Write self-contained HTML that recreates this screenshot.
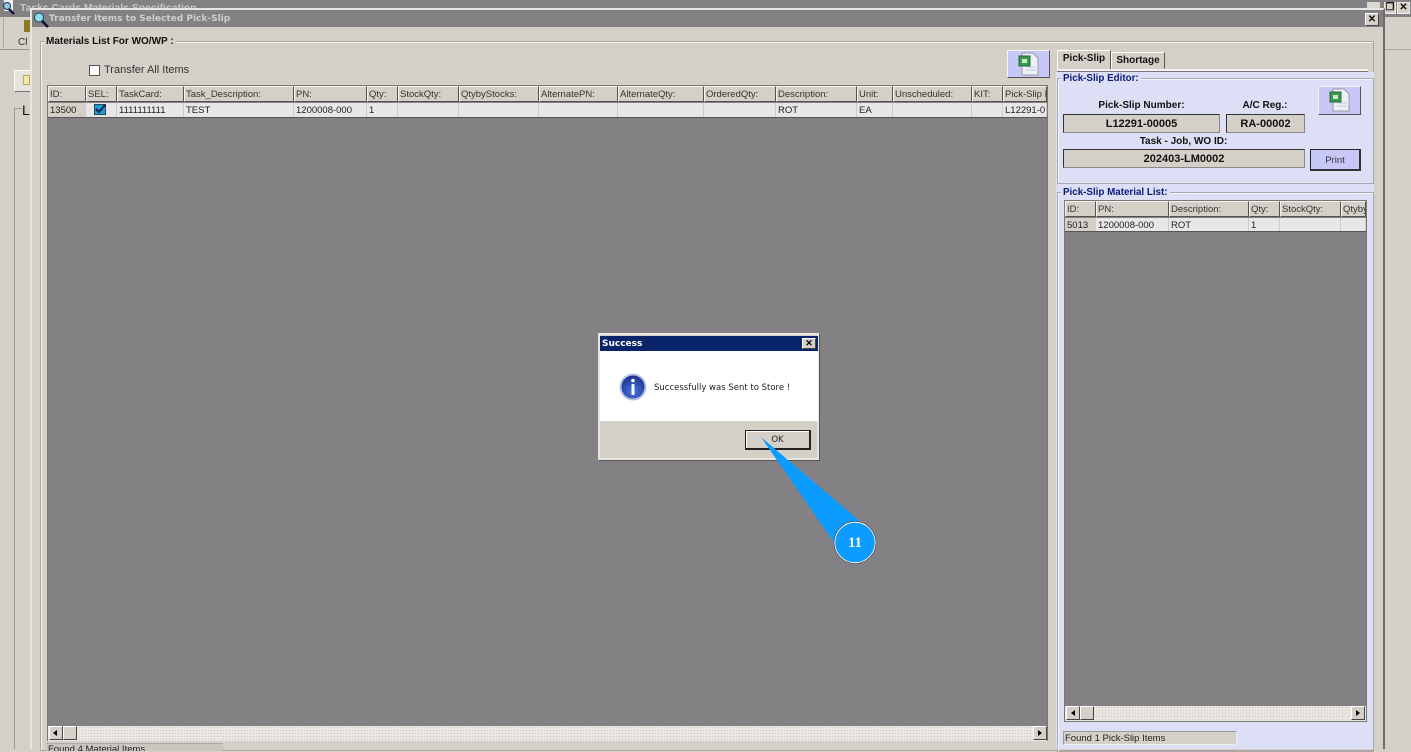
<!DOCTYPE html>
<html><head><meta charset="utf-8"><style>
html,body{margin:0;padding:0}
body{width:1411px;height:749px;overflow:hidden;position:relative;background:#d4d0c8;font-family:"Liberation Sans",sans-serif;font-size:9.5px;color:#222}
div,span{position:absolute;box-sizing:border-box;white-space:nowrap}
.h{background:#d4d0c8;border:1px solid;border-color:#f4f3ef #55524e #55524e #f4f3ef;height:16px;line-height:16px;padding-left:1px;color:#333;overflow:hidden}
.c{background:#e8e6e6;border-right:1px solid #cfccc8;height:14px;line-height:15px;padding-left:2px;color:#222;overflow:hidden}
.b{font-weight:bold;color:#111}
.n{color:#0a1a78;font-weight:bold;background:#dcdff5;padding:0 2px;line-height:11px;font-size:9.800px}
.f{background:#d4d0c8;border:1px solid;border-color:#333 #888 #888 #333;text-align:center;font-weight:bold;font-size:11px;color:#111}
.sb{background:#ebe9e6;background-image:radial-gradient(#d4d0c8 35%,transparent 40%);background-size:3px 3px}
.btn{background:#d4d0c8;border:1px solid;border-color:#fff #444 #444 #fff}
.xl{background:#c8c8f8;border:1px solid;border-color:#f2f2ff #555 #555 #f2f2ff}
</style></head><body>
<!-- back window -->
<div style="left:0;top:0;width:1411px;height:17px;background:#838184"></div>
<div style="left:20px;top:3px;font-size:10.400px;font-weight:bold;color:#c8c6c4">Tasks Cards Materials Specification</div>
<svg style="position:absolute;left:1px;top:0" width="16" height="15"><rect x="3" y="0" width="9" height="11" fill="#eee"/><circle cx="6" cy="6" r="3.500" fill="#8cd" stroke="#236"/><path d="M8 9l5 5" stroke="#114" stroke-width="2.500"/></svg>
<div style="left:0;top:17px;width:30px;height:33px;background:#d4d0c8;border-bottom:1px solid #999"></div>
<div style="left:3px;top:18px;width:1px;height:30px;background:#aaa"></div>
<div style="left:24px;top:20px;width:6px;height:12px;background:#8a7a20"></div>
<div style="left:18px;top:37px;font-size:10px;color:#333">Cl</div>
<div style="left:14px;top:70px;width:18px;height:22px;background:#e6e4de;border:1px solid;border-color:#fff #777 #777 #fff"></div>
<div style="left:23px;top:75px;width:7px;height:10px;background:#f3e9b0;border:1px solid #b9a85a"></div>
<div style="left:14px;top:108px;width:16px;height:641px;border-left:1px solid #999;border-top:1px solid #999"></div>
<div style="left:22px;top:102px;font-size:14px;color:#111;background:#d4d0c8;width:8px;height:16px;line-height:16px">L</div>
<div style="left:1384px;top:17px;width:27px;height:33px;border-bottom:1px solid #aaa"></div>
<div style="left:1384px;top:2px;width:12px;height:12px;background:#d4d0c8;border:1px solid #eee;font-size:10px;line-height:10px;font-weight:bold;text-align:center;color:#111">&#10064;</div>
<div style="left:1397px;top:2px;width:13px;height:12px;background:#d4d0c8;border:1px solid #eee;font-size:10px;line-height:10px;font-weight:bold;text-align:center;color:#111">&#10005;</div>
<div style="left:1367px;top:2px;width:13px;height:8px;background:#d9d7d2"></div>

<!-- front window -->
<div style="left:30px;top:8px;width:1355px;height:741px;background:#d4d0c8;border-top:2px solid #e8e6e2;border-left:2px solid #e8e6e2;border-right:2px solid #6e6c6c"></div>
<div style="left:32px;top:10px;width:1351px;height:17px;background:#838184"></div>
<svg style="position:absolute;left:33px;top:12px" width="16" height="16"><circle cx="6" cy="5.500" r="4.500" fill="#8cdfe8" stroke="#246"/><path d="M9 9l6 6" stroke="#113" stroke-width="2.500"/></svg>
<div style="left:49px;top:13px;font-family:'DejaVu Sans',sans-serif;font-size:9px;font-weight:bold;color:#d0cfcc;line-height:13px">Transfer Items to Selected Pick-Slip</div>
<div class="btn" style="left:1365px;top:13px;width:14px;height:13px;text-align:center;font-size:10px;line-height:11px;font-weight:bold;color:#111">&#10005;</div>

<!-- materials fieldset -->
<div style="left:40px;top:41px;width:1334px;height:710px;border:1px solid #aaa79f;box-shadow:inset 1px 1px 0 #f4f3ef"></div>
<div class="b" style="left:44px;top:36px;background:#d4d0c8;padding:0 2px;font-size:10px;line-height:12px">Materials List For WO/WP :</div>
<div style="left:89px;top:65px;width:11px;height:11px;background:#fff;border:1px solid #555"></div>
<div style="left:104px;top:64px;font-size:11px;line-height:13px;color:#333">Transfer All Items</div>
<div class="xl" style="left:1007px;top:50px;width:43px;height:28px"></div>
<svg style="position:absolute;left:1018px;top:52px" width="22" height="24"><path d="M4 1h11l5 5v17H4z" fill="#eef0f6" stroke="#99a"/><rect x="1" y="4" width="11" height="10" fill="#3a9a4a" stroke="#264"/><rect x="4" y="7" width="5" height="4" fill="#cfe8c8"/><path d="M8 15h10M8 18h10" stroke="#bcd"/></svg>

<!-- main grid -->
<div style="left:47px;top:85px;width:1001px;height:656px;background:#838184;border:1px solid #777"></div>
<div class="h" style="left:48px;top:86px;width:38px">ID:</div>
<div class="h" style="left:86px;top:86px;width:31px">SEL:</div>
<div class="h" style="left:117px;top:86px;width:67px">TaskCard:</div>
<div class="h" style="left:184px;top:86px;width:110px">Task_Description:</div>
<div class="h" style="left:294px;top:86px;width:73px">PN:</div>
<div class="h" style="left:367px;top:86px;width:31px">Qty:</div>
<div class="h" style="left:398px;top:86px;width:61px">StockQty:</div>
<div class="h" style="left:459px;top:86px;width:80px">QtybyStocks:</div>
<div class="h" style="left:539px;top:86px;width:79px">AlternatePN:</div>
<div class="h" style="left:618px;top:86px;width:86px">AlternateQty:</div>
<div class="h" style="left:704px;top:86px;width:72px">OrderedQty:</div>
<div class="h" style="left:776px;top:86px;width:81px">Description:</div>
<div class="h" style="left:857px;top:86px;width:36px">Unit:</div>
<div class="h" style="left:893px;top:86px;width:79px">Unscheduled:</div>
<div class="h" style="left:972px;top:86px;width:31px">KIT:</div>
<div class="h" style="left:1003px;top:86px;width:44px">Pick-Slip N</div>

<div class="c" style="left:48px;top:103px;width:38px;background:#d4d0c8">13500</div>
<div class="c" style="left:86px;top:103px;width:31px"></div>
<div style="left:94px;top:104px;width:12px;height:11px;background:#1aa0d0;border:1px solid #345"></div>
<svg style="position:absolute;left:94px;top:103px" width="13" height="12"><path d="M2 6l3 3 6-7" fill="none" stroke="#0a1a50" stroke-width="2"/></svg>
<div class="c" style="left:117px;top:103px;width:67px">1111111111</div>
<div class="c" style="left:184px;top:103px;width:110px">TEST</div>
<div class="c" style="left:294px;top:103px;width:73px">1200008-000</div>
<div class="c" style="left:367px;top:103px;width:31px">1</div>
<div class="c" style="left:398px;top:103px;width:61px"></div>
<div class="c" style="left:459px;top:103px;width:80px"></div>
<div class="c" style="left:539px;top:103px;width:79px"></div>
<div class="c" style="left:618px;top:103px;width:86px"></div>
<div class="c" style="left:704px;top:103px;width:72px"></div>
<div class="c" style="left:776px;top:103px;width:81px">ROT</div>
<div class="c" style="left:857px;top:103px;width:36px">EA</div>
<div class="c" style="left:893px;top:103px;width:79px"></div>
<div class="c" style="left:972px;top:103px;width:31px"></div>
<div class="c" style="left:1003px;top:103px;width:44px">L12291-0</div>
<div style="left:48px;top:117px;width:999px;height:1px;background:#555"></div>

<div class="sb" style="left:48px;top:726px;width:999px;height:15px"></div>
<div class="btn" style="left:49px;top:726px;width:14px;height:14px"></div>
<div style="left:53px;top:730px;width:0;height:0;border:3.500px solid transparent;border-right:4px solid #000;border-left:0"></div>
<div class="btn" style="left:63px;top:726px;width:14px;height:14px"></div>
<div class="btn" style="left:1033px;top:726px;width:14px;height:14px"></div>
<div style="left:1038px;top:730px;width:0;height:0;border:3.500px solid transparent;border-left:4px solid #000;border-right:0"></div>
<div style="left:46px;top:743px;width:177px;height:8px;background:#c9c6bf;border-top:1px solid #aaa;padding-left:2px;line-height:11px;overflow:hidden;color:#222">Found 4 Material Items</div>

<!-- right panel -->
<div style="left:1056px;top:72px;width:318px;height:677px;background:#dcdff5"></div>
<div style="left:1057px;top:50px;width:54px;height:20px;background:#d4d0c8;border:1px solid;border-color:#fff #555 #d4d0c8 #fff;text-align:center;font-weight:bold;font-size:10px;line-height:16px;color:#111">Pick-Slip</div>
<div style="left:1111px;top:52px;width:54px;height:17px;background:#d4d0c8;border:1px solid;border-color:#fff #555 #d4d0c8 #fff;text-align:center;font-weight:bold;font-size:10px;line-height:15px;color:#111">Shortage</div>
<div style="left:1057px;top:69px;width:311px;height:3px;background:#f4f3ef;border-bottom:1px solid #777"></div>

<div style="left:1057px;top:78px;width:317px;height:106px;border:1px solid #aaa9b0;box-shadow:inset 1px 1px 0 #f4f4ff"></div>
<div class="n" style="left:1061px;top:73px">Pick-Slip Editor:</div>
<div class="xl" style="left:1318px;top:86px;width:43px;height:29px"></div>
<svg style="position:absolute;left:1329px;top:88px" width="22" height="24"><path d="M4 1h11l5 5v17H4z" fill="#eef0f6" stroke="#99a"/><rect x="1" y="4" width="11" height="10" fill="#3a9a4a" stroke="#264"/><rect x="4" y="7" width="5" height="4" fill="#cfe8c8"/><path d="M8 15h10M8 18h10" stroke="#bcd"/></svg>
<div class="b" style="left:1063px;top:100px;width:157px;text-align:center;line-height:12px;font-size:10px">Pick-Slip Number:</div>
<div class="b" style="left:1226px;top:100px;width:78px;text-align:center;line-height:12px;font-size:10px">A/C Reg.:</div>
<div class="f" style="left:1063px;top:114px;width:157px;height:19px;line-height:18px">L12291-00005</div>
<div class="f" style="left:1226px;top:114px;width:79px;height:19px;line-height:18px">RA-00002</div>
<div class="b" style="left:1063px;top:136px;width:241px;text-align:center;line-height:12px;font-size:10px">Task - Job, WO ID:</div>
<div class="f" style="left:1063px;top:149px;width:242px;height:19px;line-height:18px">202403-LM0002</div>
<div style="left:1310px;top:149px;width:51px;height:22px;background:#c8c8f8;border:1px solid;border-color:#222 #333 #333 #222;border-bottom-width:2px;border-right-width:2px;text-align:center;line-height:21px;color:#333">Print</div>

<div style="left:1057px;top:192px;width:317px;height:560px;border:1px solid #aaa9b0;box-shadow:inset 1px 1px 0 #f4f4ff"></div>
<div class="n" style="left:1061px;top:187px">Pick-Slip Material List:</div>

<div style="left:1064px;top:200px;width:303px;height:522px;background:#838184;border:1px solid #777"></div>
<div class="h" style="left:1065px;top:201px;width:31px">ID:</div>
<div class="h" style="left:1096px;top:201px;width:73px">PN:</div>
<div class="h" style="left:1169px;top:201px;width:80px">Description:</div>
<div class="h" style="left:1249px;top:201px;width:31px">Qty:</div>
<div class="h" style="left:1280px;top:201px;width:61px">StockQty:</div>
<div class="h" style="left:1341px;top:201px;width:25px">Qtyby</div>
<div class="c" style="left:1065px;top:218px;width:31px;background:#d4d0c8">5013</div>
<div class="c" style="left:1096px;top:218px;width:73px">1200008-000</div>
<div class="c" style="left:1169px;top:218px;width:80px">ROT</div>
<div class="c" style="left:1249px;top:218px;width:31px">1</div>
<div class="c" style="left:1280px;top:218px;width:61px"></div>
<div class="c" style="left:1341px;top:218px;width:25px"></div>
<div style="left:1065px;top:231px;width:301px;height:1px;background:#555"></div>
<div class="sb" style="left:1065px;top:706px;width:301px;height:15px"></div>
<div class="btn" style="left:1066px;top:706px;width:14px;height:14px"></div>
<div style="left:1071px;top:710px;width:0;height:0;border:3.500px solid transparent;border-right:4px solid #000;border-left:0"></div>
<div class="btn" style="left:1080px;top:706px;width:14px;height:14px"></div>
<div class="btn" style="left:1351px;top:706px;width:14px;height:14px"></div>
<div style="left:1356px;top:710px;width:0;height:0;border:3.500px solid transparent;border-left:4px solid #000;border-right:0"></div>
<div style="left:1063px;top:731px;width:174px;height:14px;background:#d4d0c8;border:1px solid;border-color:#999 #eee #eee #999;padding-left:1px;line-height:13px;color:#222">Found 1 Pick-Slip Items</div>

<!-- dialog -->
<div style="left:598px;top:333px;width:221px;height:127px;background:#d4d0c8;border:2px solid #e8e6e2;box-shadow:1px 1px 0 #555"></div>
<div style="left:600px;top:336px;width:218px;height:15px;background:#0a246a;color:#fff;font-family:'DejaVu Sans',sans-serif;font-weight:bold;font-size:9px;line-height:16px;padding-left:2px">Success</div>
<div class="btn" style="left:802px;top:338px;width:14px;height:11px;font-size:9px;line-height:9px;text-align:center;font-weight:bold;color:#000">&#10005;</div>
<div style="left:600px;top:351px;width:218px;height:70px;background:#fff"></div>
<svg style="position:absolute;left:619px;top:373px" width="28" height="28"><defs><radialGradient id="g" cx=".5" cy=".7" r=".7"><stop offset="0" stop-color="#4a78e0"/><stop offset="1" stop-color="#1a2f90"/></radialGradient></defs><circle cx="14" cy="14" r="13.500" fill="#b4c0dc"/><circle cx="14" cy="14" r="11.500" fill="url(#g)"/><circle cx="14" cy="7.500" r="1.800" fill="#fff"/><rect x="12.500" y="11" width="3" height="11" rx="1" fill="#fff"/></svg>
<div style="left:654px;top:382px;font-family:'DejaVu Sans',sans-serif;font-size:8.500px;line-height:13px;color:#222">Successfully was Sent to Store !</div>
<div style="left:745px;top:430px;width:66px;height:20px;background:#d4d0c8;border:1px solid #222;border-bottom-width:2px;border-right-width:2px;box-shadow:inset 1px 1px 0 #fff;text-align:center;line-height:19px;color:#222;font-family:'DejaVu Sans',sans-serif;font-size:8.500px">OK</div>

<!-- callout -->
<svg style="position:absolute;left:750px;top:425px" width="135" height="145"><path d="M11 12L87 122 112 98z" fill="#0c9bff"/><circle cx="105" cy="117.500" r="20.500" fill="#0c9bff" stroke="#fff" stroke-width="1.500"/><circle cx="105" cy="117.500" r="21" fill="none" stroke="#222" stroke-width=".6"/><text x="105" y="122" text-anchor="middle" font-family="Liberation Serif,serif" font-weight="bold" font-size="14.500" fill="#fff">11</text></svg>
</body></html>
